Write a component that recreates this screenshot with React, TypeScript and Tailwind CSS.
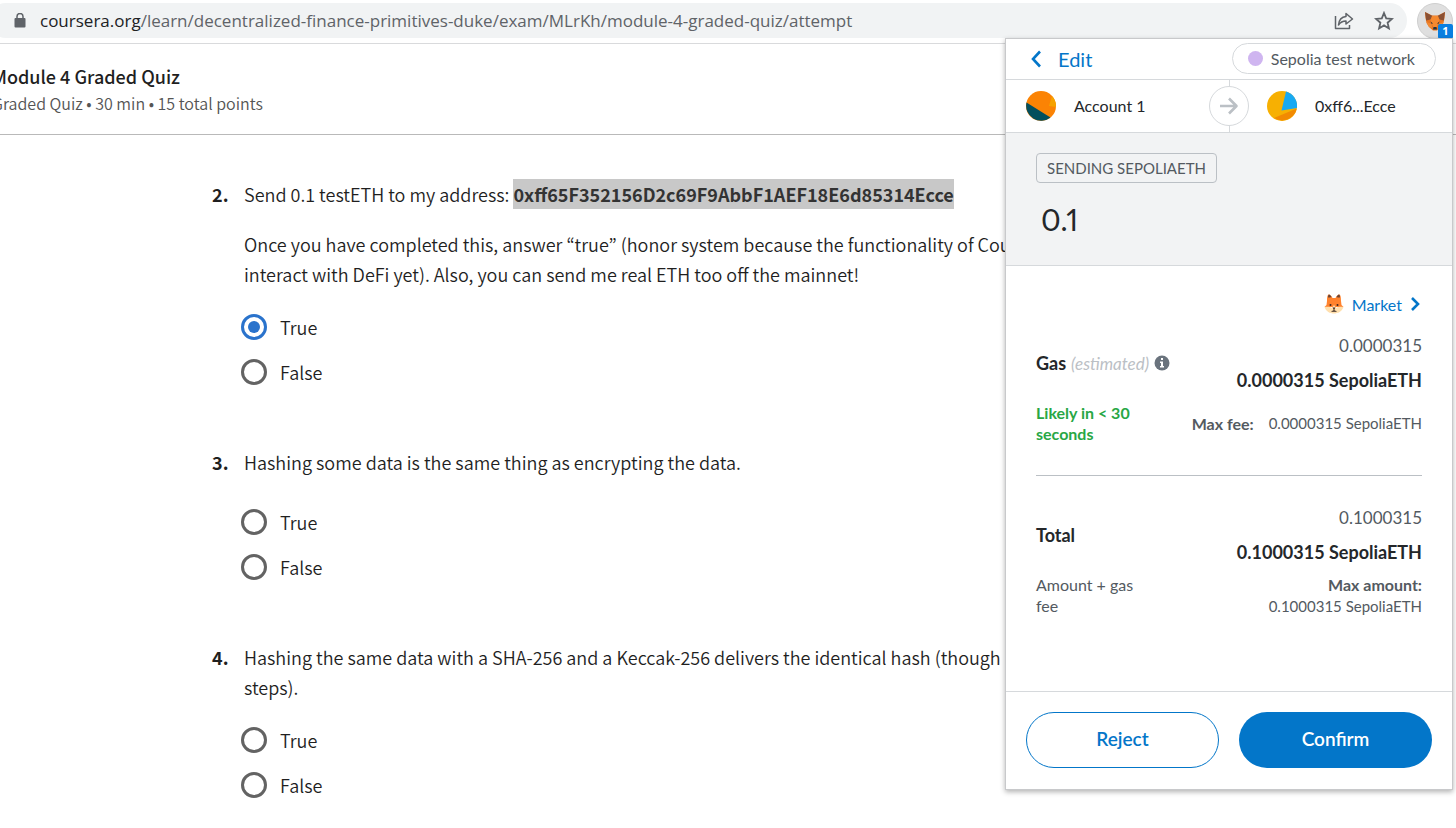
import React from "react";

const SOURCE = "font-['Noto_Sans_CJK_KR','Noto_Sans',sans-serif]";

function Choice({ name, label, checked }: { name: string; label: string; checked?: boolean }) {
  return (
    <label className="flex h-[45px] items-center gap-[13px]">
      <input
        type="radio"
        name={name}
        defaultChecked={checked}
        className="size-[26px] -ml-[3px] shrink-0 appearance-none rounded-full border-[3px] border-[#636363] bg-clip-content p-1 checked:border-[#2a73cc] checked:bg-[#2a73cc]"
      />
      <span>{label}</span>
    </label>
  );
}

function Question({ n, children, checked, gap = "mt-[15px]" }: { n: number; children: React.ReactNode; checked?: boolean; gap?: string }) {
  return (
    <li className="grid grid-cols-[32px_1fr]">
      <span className="font-bold">{n}.</span>
      <div>
        {children}
        <fieldset className={gap}>
          <Choice name={`q${n}`} label="True" checked={checked} />
          <Choice name={`q${n}`} label="False" />
        </fieldset>
      </div>
    </li>
  );
}

function MetaFox() {
  return (
    <svg viewBox="0 0 22 20" className="h-5 w-[22px]" aria-hidden="true">
      <path d="M1 1 L8 4.500 H14 L21 1 L20.500 7 L19.500 12 L17 16 L13 19.500 H9 L5 16 L2.500 12 L1.500 7Z" fill="#e8751f" />
      <path d="M1 1 L8.500 5 L6.500 8.500 L2.200 9.500Z M21 1 L13.500 5 L15.500 8.500 L19.800 9.500Z" fill="#8a5033" />
      <path d="M8 5 H14 L15.500 9 L13.500 14 L12.500 17 H9.500 L8.500 14 L6.500 9Z" fill="#f5892f" />
      <path d="M2.500 11 L7.500 13 L8.500 17 L5 16Z M19.500 11 L14.500 13 L13.500 17 L17 16Z" fill="#f08a35" />
      <path d="M6.500 10.500 L9 12.500 L7.500 12.800Z M15.500 10.500 L13 12.500 L14.500 12.800Z M9.500 16 H12.500 L13 18.500 H9Z" fill="#26333f" />
    </svg>
  );
}

function FoxFace() {
  return (
    <svg viewBox="0 0 20 20" className="size-5" aria-hidden="true">
      <path d="M3 7 C3 3 3.500 .5 5 .5 C6.500 .5 8 3 8.500 4 H11.500 C12 3 13.500 .5 15 .5 C16.500 .5 17 3 17 7 L17.500 11 L19.500 13 H.5 L2.500 11Z" fill="#ff822d" />
      <path d="M4 3.500 C4 1.800 4.500 .5 5 .5 C6 .5 7 2 7.600 3 L6 3.500Z M16 3.500 C16 1.800 15.500 .5 15 .5 C14 .5 13 2 12.400 3 L14 3.500Z" fill="#6d4534" />
      <path d="M.5 13 C3 12.500 6 12.500 8 14 L10 11 L12 14 C14 12.500 17 12.500 19.500 13 C18 17.500 14 19.500 10 19.500 S2 17.500 .5 13Z" fill="#ffdfad" />
      <circle cx="6.500" cy="11" r="1" fill="#3b2820" />
      <circle cx="13.500" cy="11" r="1" fill="#3b2820" />
      <path d="M8.500 13.500 H11.500 L10.500 15 V16.500 L12.500 17 V17.800 H7.500 V17 L9.500 16.500 V15Z" fill="#3b2820" />
    </svg>
  );
}

function BrowserBar() {
  return (
    <header className="flex h-11 items-start border-b border-[#d9dadc] bg-white pt-[3px] font-['Open_Sans','Noto_Sans',sans-serif]">
      <div className="-ml-3 flex h-[35px] flex-1 items-center rounded-full bg-[#f1f3f4] pr-[13px] pl-6 text-[#5f6368]">
        <svg viewBox="0 0 12 15" className="mx-0.5 h-[15px] w-3 shrink-0" aria-hidden="true">
          <rect x="0.500" y="5" width="11" height="9.500" rx="1" fill="#5f6368" />
          <path d="M3 6 V3.500 a3 3 0 0 1 6 0 V6" fill="none" stroke="#5f6368" strokeWidth="1.500" />
        </svg>
        <span className="ml-3 flex-1 text-[17px] whitespace-nowrap">
          <span className="text-[#202124]">coursera.org</span>
          /learn/decentralized-finance-primitives-duke/exam/MLrKh/module-4-graded-quiz/attempt
        </span>
        <button aria-label="Share" className="mr-5">
          <svg viewBox="0 0 20 18" className="h-[18px] w-5" fill="none" stroke="#5f6368" strokeWidth="1.500" strokeLinejoin="round">
            <path d="M1.500 4 V16.500 H15.500 V13" />
            <path d="M12 1.500 L18.500 7 L12 12 V9 C8.500 9 6.500 10 4.500 13 C5 8 7.500 4.800 12 4.500Z" />
          </svg>
        </button>
        <button aria-label="Bookmark">
          <svg viewBox="0 0 20 20" className="size-5" fill="none" stroke="#5f6368" strokeWidth="1.800">
            <path d="M10 2 L12.200 7.400 L18 7.900 L13.600 11.700 L14.900 17.400 L10 14.400 L5.100 17.400 L6.400 11.700 L2 7.900 L7.800 7.400Z" />
          </svg>
        </button>
      </div>
      <button aria-label="MetaMask" className="relative mr-[3px] ml-2.5 flex size-9 items-center justify-center rounded-full border border-[#cfcfcf] bg-[#dfdfdf]">
        <MetaFox />
        <span className="absolute -right-px -bottom-px flex h-[15px] w-[15px] items-center justify-center rounded-xs bg-[#0b7fe0] text-[11px] font-bold text-white">1</span>
      </button>
    </header>
  );
}

function WalletPopup() {
  return (
    <aside className="absolute top-[38px] right-[3px] w-[448px] border border-[#c8c9cb] bg-white font-[Lato,sans-serif] text-[#24272a] shadow-[0_2px_5px_rgba(0,0,0,0.3)]">
      <div className="flex h-[41px] items-center justify-between border-b border-[#d6d9dc] pr-4 pb-px pl-6">
        <button className="flex items-center gap-4 text-[20px] text-[#0376c9]">
          <svg viewBox="0 0 12 18" className="h-[18px] w-3" fill="none" stroke="#0376c9" strokeWidth="2.600">
            <path d="M10 1.500 L3 9 L10 16.500" />
          </svg>
          Edit
        </button>
        <div className="flex h-[31px] items-center gap-2 rounded-full border border-[#d6d9dc] pr-5 pl-[15px] text-[16px] text-[#535a61]">
          <span className="size-[15px] rounded-full bg-[#cfb5f0]" />
          Sepolia test network
        </div>
      </div>

      <div className="relative grid h-[53px] grid-cols-2 items-center border-b border-[#d6d9dc] text-[16px]">
        <div className="flex items-center gap-[18px] pl-5">
          <svg viewBox="0 0 30 30" className="size-[30px]" aria-hidden="true">
            <circle cx="15" cy="15" r="15" fill="#fb8304" />
            <path d="M0.500 11.500 L24.500 26.500 A15 15 0 0 1 0.500 11.500Z" fill="#034f5d" />
            <path d="M26 5 A15 15 0 0 1 30 16 L23 15Z" fill="#f5a200" />
          </svg>
          Account 1
        </div>
        <div className="flex items-center gap-[18px] pl-[38px]">
          <svg viewBox="0 0 30 30" className="size-[30px]" aria-hidden="true">
            <circle cx="15" cy="15" r="15" fill="#f7b002" />
            <path d="M19 0.500 A15 15 0 0 1 30 17 L14.500 19.500Z" fill="#18a9f2" />
            <path d="M7 27 L29.800 17.500 A15 15 0 0 1 7 27Z" fill="#f28a02" />
          </svg>
          0xff6...Ecce
        </div>
        <div className="absolute inset-y-0 left-1/2 w-px bg-[#d6d9dc]" />
        <div className="absolute top-1.5 left-1/2 flex size-10 -translate-x-1/2 items-center justify-center rounded-full border border-[#d6d9dc] bg-white">
          <svg viewBox="0 0 20 18" className="h-[18px] w-5" fill="none" stroke="#bbc0c5" strokeWidth="2.600" strokeLinejoin="round">
            <path d="M1 9 H17 M10 1.500 L17.500 9 L10 16.500" />
          </svg>
        </div>
      </div>

      <div className="h-[133px] border-b border-[#d6d9dc] bg-[#f2f3f4] px-[30px] pt-5">
        <span className="inline-flex h-[30px] items-center rounded border border-[#bbc0c5] px-2.5 text-[15px] text-[#535a61]">SENDING SEPOLIAETH</span>
        <p className="mt-4 ml-[5px] text-[30px] leading-10 proportional-nums">0.1</p>
      </div>

      <div className="h-[426px] border-b border-[#d6d9dc] px-[30px] text-[16px] leading-[21px] text-[#535a61]">
        <div className="flex justify-end pt-[26px]">
          <button className="flex h-6 items-center gap-2 text-[#0376c9]">
            <FoxFace />
            Market
            <svg viewBox="0 0 12 16" className="h-4 w-3" fill="none" stroke="#0376c9" strokeWidth="2.600">
              <path d="M2 2 L8 8 L2 14" />
            </svg>
          </button>
        </div>

        <div className="mt-3 flex items-center justify-between">
          <div className="flex items-center gap-[5px]">
            <b className="text-[18px] text-[#24272a]">Gas</b>
            <i className="text-[17px] text-[#bbc0c5]">(estimated)</i>
            <svg viewBox="0 0 16 16" className="size-4" aria-label="Gas information">
              <circle cx="8" cy="8" r="7.500" fill="#6a737d" />
              <path d="M7 3 H9 V5 H7Z M6 6.500 H9 V11 H10 V12.500 H6 V11 H7 V8 H6Z" fill="#fff" />
            </svg>
          </div>
          <div className="text-right leading-[35px]">
            <p className="text-[17px]">0.0000315</p>
            <p className="text-[18px] font-bold text-[#24272a]">0.0000315 SepoliaETH</p>
          </div>
        </div>
        <div className="mt-1 flex items-center justify-between">
          <p className="w-[120px] font-bold text-[#28a745]">Likely in &lt; 30 seconds</p>
          <p className="flex gap-[15px]">
            <b>Max fee:</b>
            <span className="text-[15px]">0.0000315 SepoliaETH</span>
          </p>
        </div>

        <hr className="mt-[31px] border-[#bbc0c5]" />

        <div className="mt-6 flex items-center justify-between">
          <b className="text-[18px] text-[#24272a]">Total</b>
          <div className="text-right leading-[35px]">
            <p className="text-[17px]">0.1000315</p>
            <p className="text-[18px] font-bold text-[#24272a]">0.1000315 SepoliaETH</p>
          </div>
        </div>
        <div className="mt-1 flex justify-between">
          <p className="w-[110px]">Amount + gas fee</p>
          <p className="text-right">
            <b>Max amount:</b>
            <br />
            <span className="text-[15px]">0.1000315 SepoliaETH</span>
          </p>
        </div>
      </div>

      <div className="grid grid-cols-2 gap-5 px-5 pt-5 pb-[21px] text-[19px] font-semibold">
        <button className="h-14 rounded-full border border-[#0376c9] pb-0.5 text-[#0376c9]">Reject</button>
        <button className="h-14 rounded-full bg-[#0376c9] pb-0.5 text-white">Confirm</button>
      </div>
    </aside>
  );
}

export default function App() {
  return (
    <div className={`relative min-h-screen overflow-hidden bg-white text-[#1f1f1f] ${SOURCE}`}>
      <BrowserBar />
      <div className="-ml-2 h-[91px] border-b border-[#b9b9b9] pt-[19px]">
        <h1 className="text-[18px] leading-[27px] font-medium">Module 4 Graded Quiz</h1>
        <p className="text-[16px] leading-[27px] font-[350] text-[#555]">Graded Quiz • 30 min • 15 total points</p>
      </div>
      <main className="mr-[450px] overflow-hidden pt-11 pl-[212px] text-[18px] leading-[30px] font-[350] text-[#1f1f1f]">
        <ol className="flex flex-col gap-[53px] whitespace-nowrap">
          <Question n={2} checked>
            <p>
              Send 0.1 testETH to my address:{" "}
              <strong className="inline-block bg-[#c8c8c8] text-[#333]">0xff65F352156D2c69F9AbbF1AEF18E6d85314Ecce</strong>
            </p>
            <p className="mt-5">
              Once you have completed this, answer “true” (honor system because the functionality of Coursera
              <br />
              interact with DeFi yet). Also, you can send me real ETH too off the mainnet!
            </p>
          </Question>
          <Question n={3} gap="mt-[22px]">
            <p>Hashing some data is the same thing as encrypting the data.</p>
          </Question>
          <Question n={4}>
            <p>
              Hashing the same data with a SHA-256 and a Keccak-256 delivers the identical hash (though
              <br />
              steps).
            </p>
          </Question>
        </ol>
      </main>
      <WalletPopup />
    </div>
  );
}
